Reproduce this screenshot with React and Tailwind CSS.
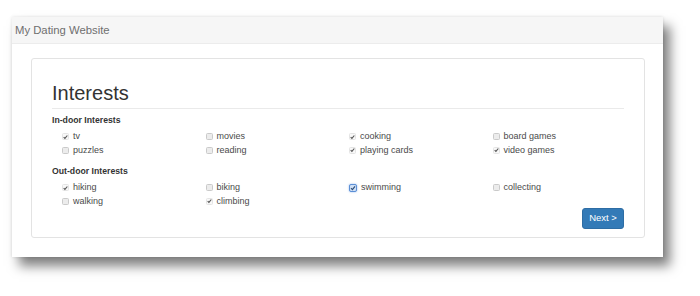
const INDOOR = [
  ['tv', true], ['movies', false], ['cooking', true], ['board games', false],
  ['puzzles', false], ['reading', false], ['playing cards', true], ['video games', true],
];

const OUTDOOR = [
  ['hiking', true], ['biking', false], ['swimming', true, true], ['collecting', false],
  ['walking', false], ['climbing', true],
];

function Box({ checked, focused }) {
  if (focused) {
    return (
      <span className="flex h-[8px] w-[8px] items-center justify-center rounded-[2px] border border-[#5b8fd6] bg-[#cfe0f6] shadow-[0_0_2px_rgba(70,130,220,0.6)]">
        <svg width="6" height="6" viewBox="0 0 6 6"><path d="M1 3.2 L2.4 4.6 L5 1.3" fill="none" stroke="#2f4f7a" strokeWidth="1.2" /></svg>
      </span>
    );
  }
  return (
    <span className={'flex h-[7px] w-[7px] items-center justify-center rounded-[1.5px] border ' + (checked ? 'border-[#e4e4e4] bg-[#f8f8f8]' : 'border-[#cacaca] bg-[#ececec]')}>
      {checked && (
        <svg width="6" height="6" viewBox="0 0 6 6"><path d="M0.8 3.2 L2.3 4.7 L5.2 1.2" fill="none" stroke="#555" strokeWidth="1.3" /></svg>
      )}
    </span>
  );
}

function Group({ title, items }) {
  return (
    <div>
      <div className="h-[12px] text-[8.7px] font-bold leading-[12px] text-[#333]">{title}</div>
      <div className="mt-[4px] grid grid-cols-[143.5px_143.5px_143.5px_143.5px]">
        {items.map(([label, checked, focused]) => (
          <label key={label} className="flex h-[13.5px] items-center gap-[4px] pl-[10px] text-[9px] leading-[13.5px] text-[#4a4a4a]">
            <Box checked={checked} focused={focused} />
            <span>{label}</span>
          </label>
        ))}
      </div>
    </div>
  );
}

export default function App() {
  return (
    <div className="h-[296px] w-[700px] bg-white pl-[12px] pt-[17px]" style={{ fontFamily: '"Liberation Sans", Arial, sans-serif' }}>
      <div className="h-[240px] w-[651px] bg-white shadow-[0_0_3px_rgba(0,0,0,0.12),7px_9px_11px_rgba(0,0,0,0.5)]">
        {/* header */}
        <div className="flex h-[27px] items-center border-b border-[#ececec] bg-[#f6f6f6] pl-[3px] text-[11.3px] text-[#6f6f6f]">
          My Dating Website
        </div>

        {/* panel */}
        <div className="ml-[19px] mt-[14px] h-[180px] w-[614px] rounded-[3px] border border-[#e3e3e3] px-[20px] pt-[23px]">
          <h1 className="text-[20px] leading-[22px] text-[#333]">Interests</h1>
          <div className="mt-[4px] border-t border-[#eaeaea]" />
          <div className="mt-[5px]">
            <Group title="In-door Interests" items={INDOOR} />
          </div>
          <div className="mt-[8px]">
            <Group title="Out-door Interests" items={OUTDOOR} />
          </div>
          <div className="flex justify-end">
            <button className="h-[21px] w-[42px] rounded-[3px] border border-[#2e6da4] bg-[#337ab7] text-[9.5px] text-white">
              Next &gt;
            </button>
          </div>
        </div>
      </div>
    </div>
  );
}
